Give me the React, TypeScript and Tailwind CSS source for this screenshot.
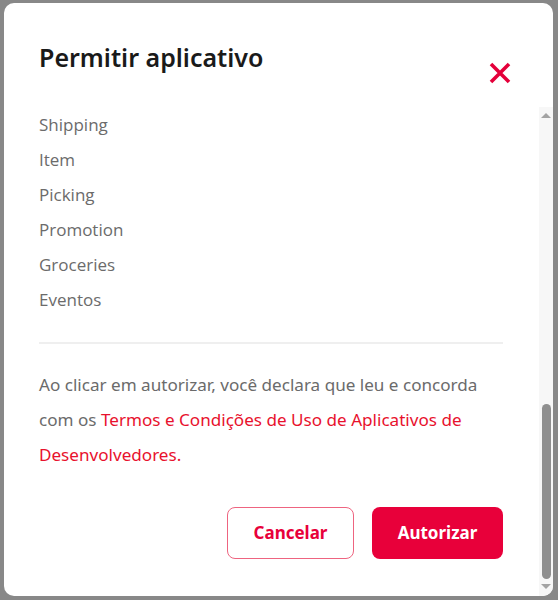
import React from 'react'

const scopes = ['Shipping', 'Item', 'Picking', 'Promotion', 'Groceries', 'Eventos']

function CloseIcon() {
    return (
        <svg width="22" height="22" viewBox="0 0 22 22" aria-hidden="true">
            <path d="M2 2 L20 20 M20 2 L2 20" stroke="#e4003a" strokeWidth="3.6" strokeLinecap="butt"/>
        </svg>
    )
}

function FakeScrollbar() {
    return (
        <div className="flex w-[14px] flex-none flex-col items-center bg-[#f7f7f7] rounded-br-[10px]">
            <div className="mt-[6px] h-0 w-0 border-x-[5px] border-b-[5px] border-x-transparent border-b-[#a3a3a3]"/>
            <div className="flex-1"/>
            <div className="h-[175px] w-[9px] rounded-full bg-[#8f8f8f]"/>
            <div className="mt-[5px] mb-[7px] h-0 w-0 border-x-[5px] border-t-[5px] border-x-transparent border-t-[#a3a3a3]"/>
        </div>
    )
}

export default function App() {
    return (
        <div className="h-[600px] w-[558px] overflow-hidden bg-[#888888] pt-[3px] pr-[5px] pb-[4px] pl-[4px]">
            <div className="flex h-[593px] flex-col rounded-[10px] bg-white font-['Noto_Sans',sans-serif]">
                <div className="flex h-[103.5px] flex-none items-start justify-between pl-[35px] pr-[42px]">
                    <h1 className="mt-[37px] text-[25px] leading-[34px] font-semibold text-[#1a1a1a]">
                        Permitir aplicativo
                    </h1>
                    <button type="button" aria-label="Fechar" className="mt-[59px]">
                        <CloseIcon/>
                    </button>
                </div>
                <div className="flex min-h-0 flex-1">
                    <div className="flex-1 pl-[35px] pr-[36px]">
                        <ul className="font-['Open_Sans',sans-serif] text-[17px] leading-[35px] text-[#6b6b6b]">
                            {scopes.map((scope) => (
                                <li key={scope}>{scope}</li>
                            ))}
                        </ul>
                        <div className="mt-[25px] h-[2px] bg-[#efefef]"/>
                        <p className="mt-[23px] text-[17.1px] leading-[35px] text-[#6b6b6b]">
                            Ao clicar em autorizar, você declara que leu e concorda com os{' '}
                            <a href="#" className="text-[#e8112d]">Termos e Condições de Uso de Aplicativos de Desenvolvedores.</a>
                        </p>
                        <div className="mt-[35px] flex justify-end gap-[18px]">
                            <button
                                type="button"
                                className="h-[52px] w-[127px] rounded-[8px] border border-[#ee6480] text-[17px] font-bold text-[#e8003a]"
                            >
                                Cancelar
                            </button>
                            <button
                                type="button"
                                className="h-[52px] w-[131px] rounded-[8px] bg-[#e8003a] text-[17px] font-bold text-white"
                            >
                                Autorizar
                            </button>
                        </div>
                    </div>
                    <FakeScrollbar/>
                </div>
            </div>
        </div>
    )
}
